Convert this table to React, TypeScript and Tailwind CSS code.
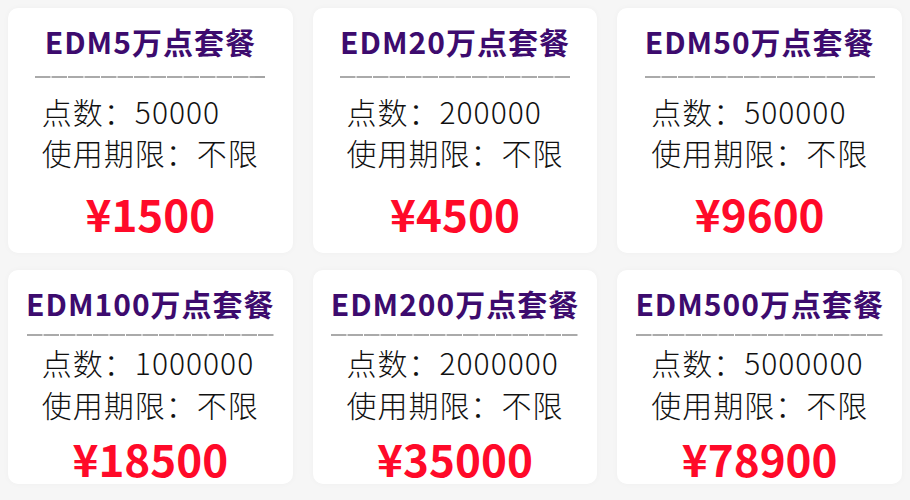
import React from "react";

type Plan = { title: string; points: string; price: string };

const row1: Plan[] = [
  { title: "EDM5万点套餐", points: "50000", price: "¥1500" },
  { title: "EDM20万点套餐", points: "200000", price: "¥4500" },
  { title: "EDM50万点套餐", points: "500000", price: "¥9600" },
];
const row2: Plan[] = [
  { title: "EDM100万点套餐", points: "1000000", price: "¥18500" },
  { title: "EDM200万点套餐", points: "2000000", price: "¥35000" },
  { title: "EDM500万点套餐", points: "5000000", price: "¥78900" },
];

const FONT = { fontFamily: '"Noto Sans CJK SC", "Noto Sans", sans-serif' };

function Divider({ width }: { width: number }) {
  return (
    <svg width={width} height={2} className="block">
      <line x1={0} y1={1} x2={width} y2={1} stroke="#8f8f8f" strokeWidth={1.6} strokeDasharray="15.5 1" />
    </svg>
  );
}

function Card({ plan, compact }: { plan: Plan; compact: boolean }) {
  return (
    <div
      className={`flex flex-col items-center rounded-[10px] bg-white shadow-[0_0_6px_rgba(0,0,0,0.03)] ${
        compact ? "h-[214px]" : "h-[245px]"
      }`}
      style={FONT}
    >
      <div className="mt-[13px] h-[40px] text-[30px] font-bold leading-[40px] tracking-[1px] text-[#3d0b6e]">
        {plan.title}
      </div>
      <div className={compact ? "mt-[11px]" : "mt-[15px]"}>
        <Divider width={compact ? 247 : 230} />
      </div>
      <div
        className={`flex flex-col items-start text-[30px] font-light tracking-[1px] text-[#111] ${
          compact ? "mt-[5px] leading-[42px]" : "mt-[13px] leading-[41px]"
        }`}
      >
        <div>点数：{plan.points}</div>
        <div>使用期限：不限</div>
      </div>
      <div
        className={`h-[50px] text-[44px] font-bold leading-[50px] text-[#ff0a29] ${
          compact ? "mt-[8px]" : "mt-[15px]"
        }`}
      >
        {plan.price}
      </div>
    </div>
  );
}

export default function App() {
  return (
    <div className="h-[500px] w-[910px] overflow-hidden bg-[#f6f6f6] px-2 pt-2">
      <div className="grid grid-cols-3 gap-x-5">
        {row1.map((p) => (
          <Card key={p.title} plan={p} compact={false} />
        ))}
      </div>
      <div className="mt-[17px] grid grid-cols-3 gap-x-5">
        {row2.map((p) => (
          <Card key={p.title} plan={p} compact={true} />
        ))}
      </div>
    </div>
  );
}
